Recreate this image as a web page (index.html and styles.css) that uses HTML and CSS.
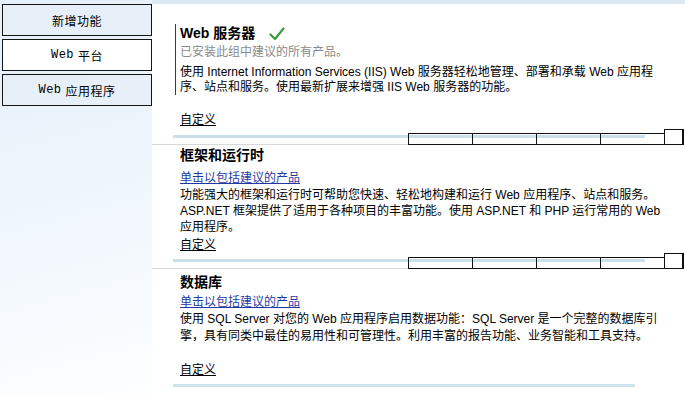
FILE: index.html
```html
<!DOCTYPE html>
<html lang="zh-CN">
<head>
<meta charset="utf-8">
<title>Web 平台安装程序</title>
<link rel="stylesheet" href="styles.css">
</head>
<body>
<div class="app">
  <nav class="sidebar">
    <div class="tab tab-blue">新增功能</div>
    <div class="tab tab-white"><span class="mono">Web</span> 平台</div>
    <div class="tab tab-blue"><span class="mono">Web</span> 应用程序</div>
  </nav>
  <main class="main">
    <section class="group group-1">
      <div class="g1-body">
        <h2 class="title">Web 服务器
          <svg class="check" width="16" height="14" viewBox="0 0 16 14"><path d="M1.5 7.5 L6 12 L14.5 1.5" fill="none" stroke="#3d9a3a" stroke-width="2.2" stroke-linecap="round" stroke-linejoin="round"/></svg>
        </h2>
        <p class="sub">已安装此组中建议的所有产品。</p>
        <p class="desc d1">使用 Internet Information Services (IIS) Web 服务器轻松地管理、部署和承载 Web 应用程<br>序、站点和服务。使用最新扩展来增强 IIS Web 服务器的功能。</p>
      </div>
      <a class="custom c1">自定义</a>
    </section>
    <div class="sep">
      <div class="sep-left"></div>
      <div class="cell"></div>
      <div class="cell"></div>
      <div class="cell"></div>
      <div class="cell"></div>
      <div class="box"></div>
    </div>
    <section class="group group-2">
      <h2 class="title">框架和运行时</h2>
      <a class="link">单击以包括建议的产品</a>
      <p class="desc d2">功能强大的框架和运行时可帮助您快速、轻松地构建和运行 Web 应用程序、站点和服务。<br>ASP.NET 框架提供了适用于各种项目的丰富功能。使用 ASP.NET 和 PHP 运行常用的 Web<br>应用程序。</p>
      <a class="custom c2">自定义</a>
    </section>
    <div class="sep sep-2">
      <div class="sep-left"></div>
      <div class="cell"></div>
      <div class="cell"></div>
      <div class="cell"></div>
      <div class="cell"></div>
      <div class="box"></div>
    </div>
    <section class="group group-3">
      <h2 class="title">数据库</h2>
      <a class="link">单击以包括建议的产品</a>
      <p class="desc d3">使用 SQL Server 对您的 Web 应用程序启用数据功能：SQL Server 是一个完整的数据库引<br>擎，具有同类中最佳的易用性和可管理性。利用丰富的报告功能、业务智能和工具支持。</p>
      <a class="custom c3">自定义</a>
    </section>
    <div class="sep-last"></div>
  </main>
</div>
</body>
</html>
```

FILE: styles.css
```css
* { box-sizing: border-box; }
html, body { margin: 0; padding: 0; }
body {
  width: 685px;
  height: 395px;
  overflow: hidden;
  font-family: "Liberation Sans", "Noto Sans CJK SC", sans-serif;
  font-size: 12px;
  color: #000;
  background: #fff;
}
.app {
  display: flex;
  height: 395px;
}
.sidebar {
  width: 152px;
  flex: none;
  padding: 4px 0 0 2px;
  display: flex;
  flex-direction: column;
  gap: 3px;
  background: linear-gradient(165deg, #e6f0fa 0%, #edf5fc 45%, #f6fafe 75%, #fdfeff 100%);
}
.tab {
  width: 150px;
  height: 32px;
  border: 1px solid #151515;
  display: flex;
  align-items: center;
  justify-content: center;
  font-size: 12px;
  font-family: "Noto Sans CJK SC", sans-serif;
  letter-spacing: 0.5px;
}
.tab-blue { background: #e7f0f9; }
.tab-white { background: #fff; }
.mono {
  font-family: "Liberation Mono", monospace;
  font-size: 12px;
  margin-right: 4px;
}
.main {
  flex: 1;
  border-top: 4px solid #dde9f4;
  background: #fff;
  display: flex;
  flex-direction: column;
}
.group {
  padding-left: 28px;
  display: flex;
  flex-direction: column;
  align-items: flex-start;
}
.title {
  margin: 0;
  font-size: 14px;
  font-weight: bold;
  line-height: 18px;
  height: 18px;
  display: flex;
  align-items: center;
  font-family: "Liberation Sans", "Noto Sans CJK SC", sans-serif;
}
.check { margin-left: 14px; margin-top: 2px; }
.sub {
  margin: 2px 0 0;
  color: #8a8a8a;
  line-height: 16px;
}
.desc {
  margin: 0;
  white-space: nowrap;
  line-height: 16px;
}
.link, .custom {
  line-height: 16px;
  text-decoration: underline;
  cursor: pointer;
}
.link { color: #1f3aa6; }
.custom { color: #000; }

.group-1 { padding-top: 20px; }
.g1-body {
  margin-left: -5px;
  padding-left: 4px;
  border-left: 1px solid #3a3a3a;
}
.d1 { margin-top: 5px; line-height: 15px; }
.c1 { margin-top: 17px; }

.sep {
  height: 16px;
  margin-top: 1px;
  display: flex;
  align-items: flex-end;
  background: linear-gradient(#c9dfea, #c9dfea) no-repeat;
  background-size: 472px 3px;
  background-position: 21px 6px;
}
.sep-left {
  width: 256px;
  height: 12px;
  border-bottom: 1px solid #d8d8d8;
  flex: none;
}
.cell {
  width: 64px;
  height: 12px;
  flex: none;
  border-top: 1px solid #111;
  border-bottom: 1px solid #111;
  border-left: 1px solid #111;
}
.box {
  width: 20px;
  height: 16px;
  flex: none;
  border: 1px solid #111;
  border-right-width: 2px;
}

.group-2 .title { margin-top: 1px; }
.group-2 .link { margin-top: 6px; }
.d2 { margin-top: 1px; }
.c2 { margin-top: 2px; }
.sep-2 { margin-top: 0; }

.group-3 .title { margin-top: 4px; }
.group-3 .link { margin-top: 3px; }
.d3 { margin-top: 1px; line-height: 17px; }
.c3 { margin-top: 17px; }

.sep-last {
  margin: 6px 0 0 21px;
  width: 462px;
  height: 3px;
  background: #cfe3ec;
}
```
